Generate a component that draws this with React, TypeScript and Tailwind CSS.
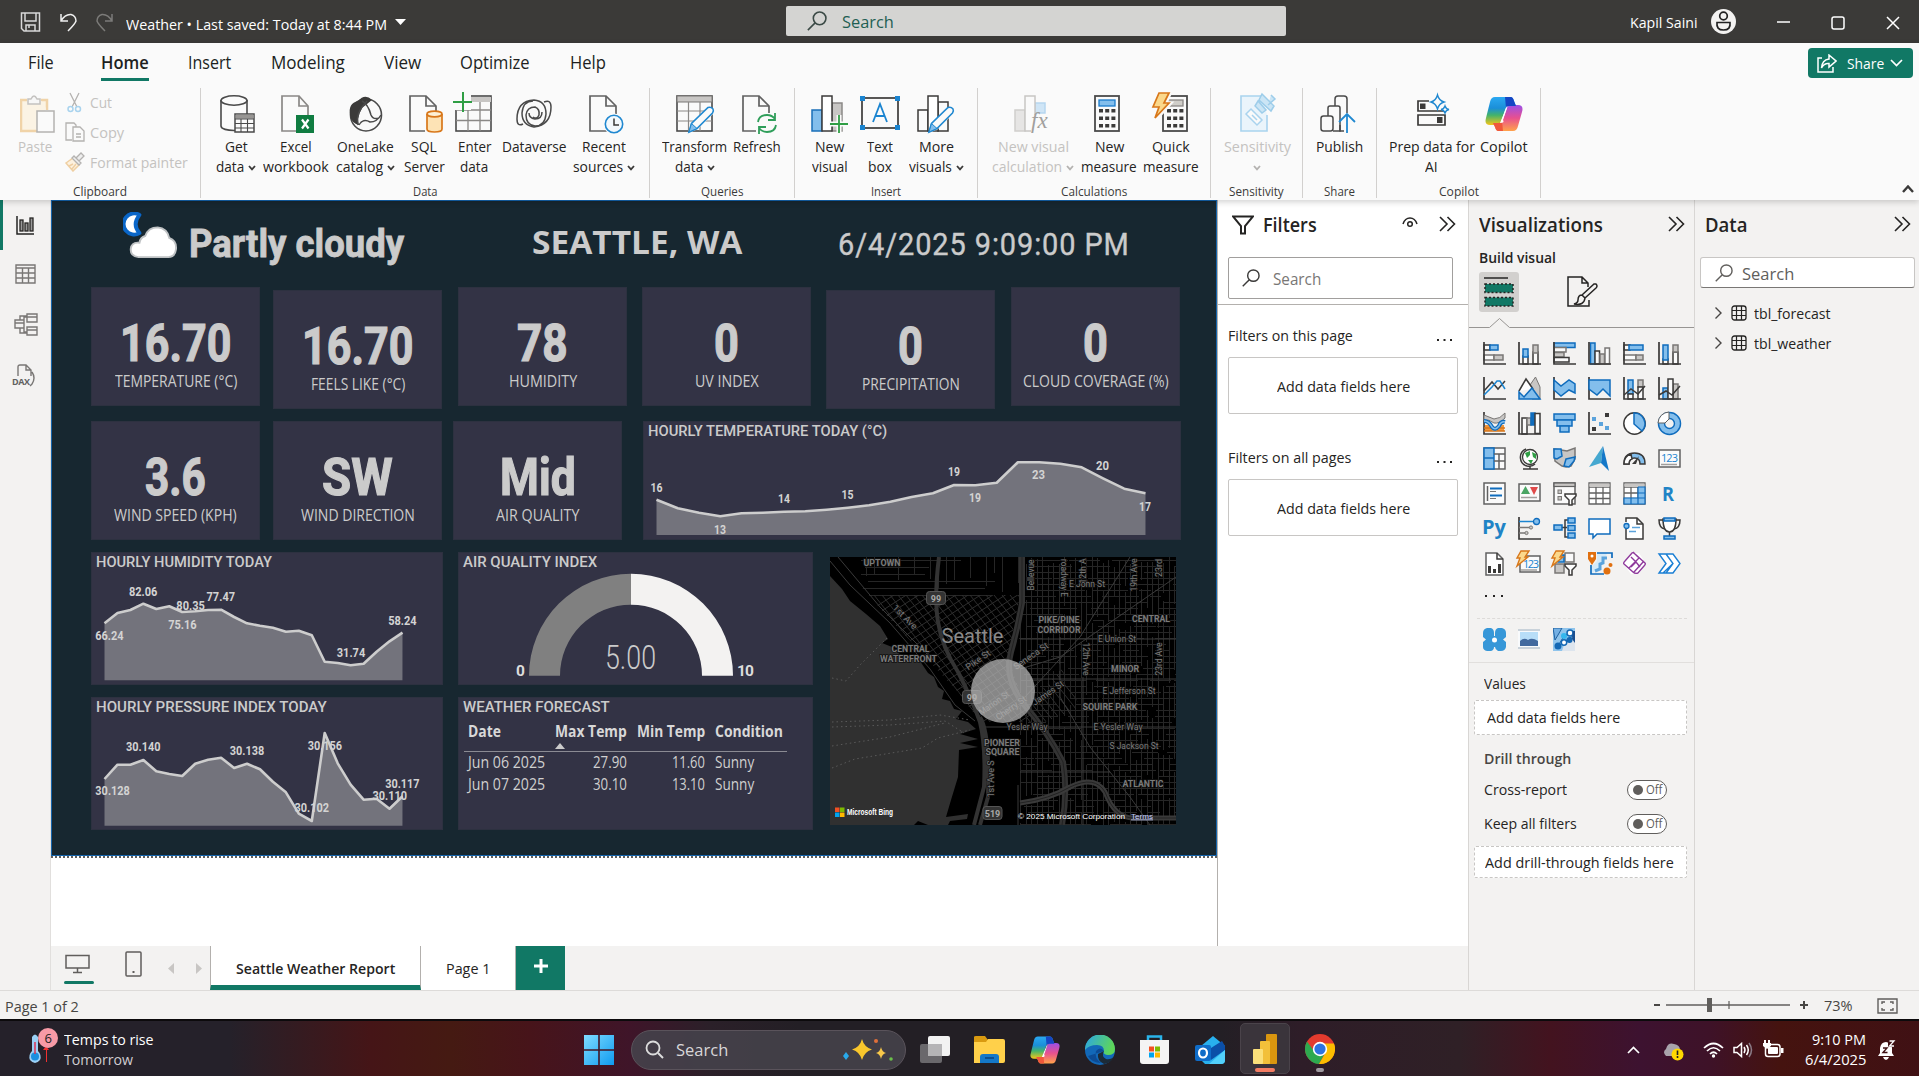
import React, { useLayoutEffect, useRef, useState } from "react";

const DIN = "font-['Roboto',sans-serif]";
const K = "#3b3a39";
const B = "#0f6cbd";
const LB = "#83beec";
const G = "#c8c6c4";
const DG = "#797775";

/** One line of text squeezed or stretched to an exact width. */
function Fit({ w, className = "", children }: { w: number; className?: string; children: React.ReactNode }) {
  const ref = useRef<HTMLSpanElement>(null);
  const [sx, setSx] = useState(1);
  useLayoutEffect(() => {
    if (ref.current) setSx(w / ref.current.offsetWidth);
  }, [w, children]);
  return (
    <span className={"block shrink-0 whitespace-nowrap " + className} style={{ width: w }}>
      <span ref={ref} className="inline-block origin-left" style={{ transform: `scaleX(${sx})` }}>
        {children}
      </span>
    </span>
  );
}

type RP = { x: number; y: number; w: number; h: number; f?: string; s?: string; sw?: number; r?: number };
const R = ({ x, y, w, h, f = "#fafafa", s = K, sw = 1.5, r = 0 }: RP) => (
  <rect x={x} y={y} width={w} height={h} fill={f} stroke={s} strokeWidth={sw} rx={r} />
);
const P = ({ d, f = "none", s = K, sw = 1.5 }: { d: string; f?: string; s?: string; sw?: number }) => (
  <path d={d} fill={f} stroke={s} strokeWidth={sw} />
);

/* ---------- small shared icons ---------- */
const Chev = ({ c = K, className = "" }: { c?: string; className?: string }) => (
  <svg className={"shrink-0 " + className} width="8" height="6" viewBox="0 0 8 6"><P d="M1 1 4 4.4 7 1" s={c} sw={1.8} /></svg>
);
const DblChev = () => (
  <svg width="17" height="16" viewBox="0 0 17 16"><P d="M1 1 8 8 1 15M8.500 1 15.500 8 8.500 15" s="#252423" sw={1.6} /></svg>
);
const Mag = ({ c = K, size = 19 }: { c?: string; size?: number }) => (
  <svg className="shrink-0" width={size} height={size} viewBox="0 0 19 19"><circle cx="12" cy="7" r="6" fill="none" stroke={c} strokeWidth="1.5" /><P d="M7.700 11.300 .8 18.200" s={c} sw={1.5} /></svg>
);
const DocShape = ({ c = "#616161" }: { c?: string }) => (
  <><P d="M5 1H21L31 11V36H5Z" f="#fafafa" s={c} sw={1.7} /><P d="M21 1V11H31" s={c} sw={1.7} /></>
);
const Pencil = () => (
  <g><path d="M13 38 16 28 32 12 38 18 22 34Z" fill="#fafafa" /><P d="M13 37 15.500 28.500 32 12.500Q35 11.500 37 14 38 16 36.500 18L21 33.500Z" f="#fafafa" s="#2088d0" sw={1.6} /><path d="M13 37 15.500 28.500 21 33.500Z" fill="#83beec" stroke="#2088d0" /></g>
);

const CopilotLogo = ({ size }: { size: number }) => (
  <svg width={size} height={size} viewBox="0 0 38 38">
    <defs>
      <linearGradient id={"cpa" + size} x1="0" y1="0" x2="0" y2="1"><stop offset="0" stopColor="#2aa8f2" /><stop offset=".4" stopColor="#1b8fd8" /><stop offset=".65" stopColor="#43b36b" /><stop offset="1" stopColor="#f5c518" /></linearGradient>
      <linearGradient id={"cpb" + size} x1="0" y1="0" x2="0" y2="1"><stop offset="0" stopColor="#9b4fe8" /><stop offset=".5" stopColor="#e8508f" /><stop offset="1" stopColor="#ffa24a" /></linearGradient>
    </defs>
    <path d="M10 2H25Q28 2 29 6L31 11H24Q21 11 20 15L16 27Q15 30 11 30H5Q-1 30 1 23L5 7Q6 2 10 2Z" fill={`url(#cpa${size})`} />
    <path d="M28 36H14Q11 36 10 32L8 28H14Q17 28 18 24L22 13Q23 10 27 10H33Q39 10 37 17L33 31Q32 36 28 36Z" fill={`url(#cpb${size})`} />
    <path d="M20 2H26Q28 2 29 6L31 11H24Q22 11 21 13Z" fill="#1546c4" />
    <path d="M18 36H13Q11 36 10 32L8 28H14Q16 28 17 26Z" fill="#f0583a" />
    <path d="M22 11 15 28Q20 28 18 25L22 13Z" fill="#fff" />
  </svg>
);

/* ---------- title bar ---------- */
function TitleBar() {
  return (
    <div className="flex h-[43px] items-center bg-[#3b3a38] text-white">
      <div className="flex w-[786px] items-center">
        <svg className="ml-[20px]" width="21" height="20" viewBox="0 0 21 20"><P d="M1.500 1H19.500V19H4L1.500 16.500ZM5 1V9H16V1M6 19V13H15V19M9 13V16" s="#d8d8d8" /></svg>
        <svg className="ml-[18px]" width="19" height="20" viewBox="0 0 19 20"><P d="M2 2V9H9M2 9Q6 2 12 2.500 17 4 17 9 16 12 9 19" s="#f0f0f0" /></svg>
        <svg className="ml-[17px]" width="19" height="20" viewBox="0 0 19 20"><P d="M17 2V9H10M17 9Q13 2 7 2.500 2 4 2 9 3 12 10 19" s="#7c7b79" /></svg>
        <Fit w={261} className="mt-[5px] ml-[12px] text-[15px] leading-5">Weather • Last saved: Today at 8:44 PM</Fit>
        <svg className="ml-[8px]" width="11" height="6"><path d="M0 0H11L5.500 6Z" fill="#fff" /></svg>
      </div>
      <div className="-mt-[1px] flex h-[30px] w-[500px] items-center rounded-[2px] bg-[#d4d4d2]">
        <div className="ml-[21px]"><Mag c="#3b4a46" size={20} /></div>
        <Fit w={52} className="mt-[2px] ml-[15px] text-[17px] leading-5 text-[#1f5f52]">Search</Fit>
      </div>
      <Fit w={68} className="ml-[344px] text-[15px] leading-5">Kapil Saini</Fit>
      <svg className="ml-[13px]" width="25" height="25" viewBox="0 0 25 25"><circle cx="12.500" cy="12.500" r="12.500" fill="#f3f2f1" /><circle cx="12.500" cy="7" r="3.800" fill="none" stroke="#222" strokeWidth="1.700" /><P d="M6 13.500H19Q20 21 12.500 21 5 21 6 13.500Z" s="#222" sw={1.700} /></svg>
      <svg className="ml-[41px]" width="14" height="14"><P d="M0 7H13" s="#fff" /></svg>
      <svg className="mt-[3px] ml-[40px]" width="14" height="14"><R x={1} y={1} w={12} h={12} f="none" s="#fff" r={2} /></svg>
      <svg className="mt-[3px] ml-[41px]" width="14" height="14"><P d="M1 1 13 13M13 1 1 13" s="#fff" /></svg>
    </div>
  );
}

/* ---------- ribbon ---------- */
const tabs = [
  { t: "File", w: 26, ml: 28 }, { t: "Home", w: 48, ml: 47, on: true }, { t: "Insert", w: 43, ml: 39 },
  { t: "Modeling", w: 74, ml: 40 }, { t: "View", w: 37, ml: 39 }, { t: "Optimize", w: 70, ml: 39 }, { t: "Help", w: 36, ml: 40 },
];

const Calc = ({ x = 5 }: { x?: number }) => (
  <>
    <R x={x} y={1} w={24} h={35} s="#4a4a4a" sw={1.800} />
    <R x={x + 4} y={5} w={16} h={6} f={x > 5 ? "#d0cec9" : "#83beec"} s={x > 5 ? "#8a8886" : "#1a7ccc"} sw={1.300} />
    {[14, 21.500, 29].map((y) => [0, 6.200, 12.400].map((dx) => <rect key={y + "-" + dx} x={x + 4 + dx} y={y} width="4" height="3.500" fill="#3b3a39" />))}
  </>
);

const ribbonIcons: Record<string, React.ReactNode> = {
  get: <><P d="M4 5V31C4 37 30 37 30 31V5" f="#fafafa" s="#4a4a4a" sw={1.600} /><ellipse cx="17" cy="5.500" rx="13" ry="4.700" fill="#fafafa" stroke="#4a4a4a" strokeWidth="1.600" /><R x={18} y={19} w={19} h={18} s="#4a4a4a" /><rect x="18.700" y="19.700" width="18" height="4" fill="#979593" /><P d="M18 24H37M18 28.500H37M18 33H37M24 24V37M30.500 24V37" s="#4a4a4a" sw={1.100} /></>,
  excel: <><P d="M5 1H22L31 11V36H5Z" s="#8a8886" sw={1.700} f="#fafafa" /><P d="M22 1V11H31" s="#8a8886" sw={1.700} /><rect x="19" y="20" width="18" height="18" fill="#107c41" /><P d="M25 24.500 31.500 33.500M31.500 24.500 25 33.500" s="#fff" sw={2.200} /></>,
  onelake: <><ellipse cx="19" cy="20" rx="15.500" ry="16" fill="#fafafa" stroke="#4a4a4a" strokeWidth="1.600" /><path d="M3 20Q1 8 11 6 18-2 25 5L15 13Q9 24 12 30 4 28 3 20Z" fill="#3b3a39" /><P d="M15 6Q21 9 24 20 26 25 32 23M12 30Q16 23 23 27 30 27 34 20M11 30Q8 18 20 6" f="none" s="#4a4a4a" /></>,
  sql: <><DocShape /><path d="M20 16H40V38H20Z" fill="#fafafa" /><P d="M22 19V34C22 38 37 38 37 34V19" f="#fde3b5" s="#d8771a" sw={1.700} /><ellipse cx="29.500" cy="19" rx="7.500" ry="2.800" fill="#fdf0d5" stroke="#d8771a" strokeWidth="1.700" /></>,
  enter: <><R x={1} y={1} w={35} h={35} s="#4a4a4a" sw={1.600} /><rect x="12" y="2" width="24" height="5" fill="#c8c6c4" /><P d="M1 15H36M1 25.500H36M13 7V36M25 7V36" s="#8a8886" sw={1.300} /><path d="M-1 0H16V15H-1Z" fill="#fafafa" /><P d="M8-3V17M-2 7H17" s="#2f9e44" sw={2} /></>,
  dataverse: <><P d="M8 29Q2 32 2 24 2 6 19 5 31 6 31 19 30 31 20 31 11 30 11 20 12 12 20 12 25 14 24 20 22 25 18 22" s="#4a4a4a" /><P d="M29 7Q36 4 36 12 36 30 19 32 7 30 7 18 8 6 18 6M27 17Q27 24 20 24 14 23 14 18" s="#4a4a4a" /></>,
  recent: <><DocShape /><circle cx="29" cy="29" r="10.500" fill="#fafafa" /><circle cx="29" cy="29" r="8.700" fill="#f3f9fd" stroke="#2088d0" strokeWidth="1.600" /><P d="M29 23.500V30H34" /></>,
  transform: <><R x={1} y={1} w={35} h={35} s="#4a4a4a" sw={1.600} /><rect x="1" y="1" width="35" height="6" fill="#c8c6c4" stroke="#797775" /><P d="M1 16H36M1 26H36M12.500 7V36M24 7V36" s="#8a8886" sw={1.200} /><Pencil /></>,
  refresh: <><DocShape /><path d="M18 18H40V38H18Z" fill="#fafafa" /><P d="M20 27Q21 20 29 20 34 20 37 24M37 18V25H30M38 30Q37 37 29 37 24 37 21 33M21 39V32H28" s="#2f9e5a" sw={1.800} /></>,
  newvisual: <><R x={1} y={15} w={10} h={21} f="#83beec" s="#1a6fb8" /><R x={21} y={8} w={10} h={28} f="#c8c6c4" s="#8a8886" /><R x={11} y={1} w={10} h={35} f="#fff" /><P d="M28 20V38M18 29H38" s="#fafafa" sw={5} /><P d="M28 20V38M19 29H37" s="#2f9e44" sw={1.800} /></>,
  text: <><R x={1} y={3} w={36} h={30} sw={1.700} /><P d="M12 27 19 9 26 27M14.500 21H23.500" s="#1a84d0" sw={1.800} />{[[-1, 1], [34, 1], [-1, 30], [34, 30]].map(([x, y]) => <rect key={x + "." + y} x={x} y={y} width="5" height="5" fill="#1a84d0" />)}</>,
  more: <><R x={1} y={15} w={10} h={21} /><R x={21} y={7} w={10} h={29} /><R x={11} y={1} w={10} h={35} f="#fff" /><g transform="translate(-1 0)"><Pencil /></g></>,
  newcalc: <><R x={1} y={15} w={10} h={21} f="#e6e5e4" s="#d0cecc" /><R x={21} y={8} w={10} h={10} f="#cfe5f6" s="#b6d6ef" /><R x={11} y={1} w={10} h={35} s="#c8c6c4" /><path d="M17 20H38V38H17Z" fill="#fafafa" /><text x="17" y="33" className="font-['Liberation_Serif',serif] text-[23px] italic" fill="#a19f9d">fx</text></>,
  newmeasure: <Calc />,
  quick: <><Calc x={11} /><path d="M6-3H19L14 8H19L3 26 5 13H0Z" fill="#fafafa" stroke="#fafafa" strokeWidth="3" /><P d="M7-2H17L12 8H17L3 23 7 12H1Z" f="#fbd88b" s="#d8771a" sw={1.700} /></>,
  sens: <><P d="M24 1H3V36H29V20" f="#eaf4fb" s="#a9d3ee" sw={1.600} /><P d="M8 19 13 14 24 25 19 30Z M14 20 19 25" f="#fafafa" s="#a9d3ee" /><P d="M24-1 36 11 33 16 21 5Z M20 6 28 15 24 18 17 11Z M33 0 37 4 30 10" f="#cbe5f5" s="#9dcdea" /></>,
  publish: <><R x={1} y={21} w={12} h={15} s="#4a4a4a" r={2.500} /><P d="M8 21V13Q8 11 10 11H18Q20 11 20 13V36H13" s="#4a4a4a" /><P d="M15 11V4Q15 1 18 1H24Q27 1 27 4V18M20 30V36H24" s="#4a4a4a" /><P d="M27 38V19M19 27 27 19 35 27" s="#2088d0" sw={1.800} /></>,
  prep: <><P d="M16 6H5V16H31M5 20H32V30H5Z" s="#3b3a39" sw={1.700} /><rect x="7" y="8.500" width="5.500" height="5.500" fill="#3b3a39" /><rect x="24" y="22" width="5.500" height="6" fill="#3b3a39" /><P d="M24.500 0Q26 5.500 31 7 26 8.500 24.500 14 23 8.500 18 7 23 5.500 24.500 0ZM32 11Q33 14 36 14.500 33 15 32 18 31 15 28 14.500 31 14 32 11Z" s="#2088d0" sw={1.400} /></>,
};

type Btn = { i: string; w: number; l: [string, number][]; ch?: boolean; dis?: boolean; chOnly?: boolean };
const groups: { name: string; nw: number; w: number; pl: number; b: Btn[] }[] = [
  { name: "Data", nw: 25, w: 449, pl: 6, b: [
    { i: "get", w: 60, l: [["Get", 23], ["data", 28]], ch: true }, { i: "excel", w: 60, l: [["Excel", 32], ["workbook", 66]] },
    { i: "onelake", w: 79, l: [["OneLake", 57], ["catalog", 47]], ch: true }, { i: "sql", w: 38, l: [["SQL", 26], ["Server", 41]] },
    { i: "enter", w: 62, l: [["Enter", 33], ["data", 28]] }, { i: "dataverse", w: 58, l: [["Dataverse", 65]] },
    { i: "recent", w: 82, l: [["Recent", 44], ["sources", 50]], ch: true }] },
  { name: "Queries", nw: 42, w: 145, pl: 7, b: [{ i: "transform", w: 77, l: [["Transform", 65], ["data", 28]], ch: true }, { i: "refresh", w: 48, l: [["Refresh", 48]] }] },
  { name: "Insert", nw: 30, w: 183, pl: 7, b: [{ i: "newvisual", w: 57, l: [["New", 29], ["visual", 36]] }, { i: "text", w: 43, l: [["Text", 26], ["box", 24]] }, { i: "more", w: 70, l: [["More", 35], ["visuals", 43]], ch: true }] },
  { name: "Calculations", nw: 66, w: 233, pl: 7, b: [{ i: "newcalc", w: 98, l: [["New visual", 71], ["calculation", 70]], ch: true, dis: true }, { i: "newmeasure", w: 54, l: [["New", 29], ["measure", 56]] }, { i: "quick", w: 69, l: [["Quick", 38], ["measure", 56]] }] },
  { name: "Sensitivity", nw: 55, w: 92, pl: 7, b: [{ i: "sens", w: 80, l: [["Sensitivity", 67]], dis: true, chOnly: true }] },
  { name: "Share", nw: 31, w: 74, pl: 7, b: [{ i: "publish", w: 60, l: [["Publish", 47]] }] },
  { name: "Copilot", nw: 40, w: 164, pl: 8, b: [{ i: "prep", w: 95, l: [["Prep data for", 86], ["AI", 13]] }, { i: "copilot", w: 49, l: [["Copilot", 48]] }] },
];

function GroupLabel({ w, children }: { w: number; children: string }) {
  return <div className="mt-[3px] flex justify-center"><Fit w={w} className="text-[13px] leading-5 text-[#3b3a39]">{children}</Fit></div>;
}

function Ribbon() {
  return (
    <div className="relative z-10 h-[157px] bg-[#fafafa] shadow-[0_2px_6px_rgba(0,0,0,0.18)]">
      <div className="flex h-[45px] items-start text-[17.5px] text-[#201f1e]">
        {tabs.map((t) => (
          <div key={t.t} className="pt-[7px]" style={{ marginLeft: t.ml }}>
            <Fit w={t.w} className={t.on ? "leading-6 font-semibold" : "leading-6"}>{t.t}</Fit>
            {t.on && <div className="mt-[4px] h-[3px] bg-[#117865]" />}
          </div>
        ))}
        <div className="mt-[5px] mr-[6px] ml-auto flex h-[30px] w-[105px] items-center rounded-[4px] bg-[#117865] text-white">
          <svg className="ml-[9px]" width="20" height="19" viewBox="0 0 20 19"><P d="M5 4H1V18H16V13" s="#fff" /><P d="M12 1 19 7 12 13V9.500Q7 9 4.500 14 5 6 12 5Z" s="#fff" /></svg>
          <Fit w={37} className="-mt-px ml-[10px] text-[15px] leading-5">Share</Fit>
          <svg className="ml-[6px]" width="13" height="8"><P d="M1 1 6.500 6.500 12 1" s="#fff" sw={1.700} /></svg>
        </div>
      </div>
      <div className="flex h-[110px]">
        <div className="w-[200px] text-[15px] text-[#c4c2c0]">
          <div className="flex h-[90px]">
            <div className="ml-[18px] w-[34px] pt-[7px]">
              <svg className="ml-[2px]" width="36" height="39" viewBox="0 0 36 39"><P d="M7 5H1V36H17M21 5H27V15" f="#fcf3e2" s="#f0d3a8" sw={2.500} /><path d="M3 7H25V34H3Z" fill="#fbf3e4" /><P d="M8 9V4H11Q14-2 17 4H20V9Z" f="#f7f7f7" s="#c4c2c0" /><R x={17} y={16} w={17} h={21} s="#b4b2b0" /></svg>
              <Fit w={34} className="mt-[2px] leading-5">Paste</Fit>
            </div>
            <div className="-mt-px ml-[13px]">
              <div className="flex h-[30px] items-center">
                <svg className="ml-[2px] w-[15px]" width="15" height="21" viewBox="0 0 15 21"><P d="M3 1 10 15M12 1 5 15" s="#b4b2b0" sw={1.300} /><circle cx="3.500" cy="17" r="2.500" fill="none" stroke="#a9d3ee" strokeWidth="1.500" /><circle cx="11" cy="17" r="2.500" fill="none" stroke="#a9d3ee" strokeWidth="1.500" /></svg>
                <Fit w={22} className="ml-[8px] leading-5">Cut</Fit>
              </div>
              <div className="flex h-[30px] items-center">
                <svg width="20" height="20" viewBox="0 0 20 20"><P d="M7 18H1V1H9L11 3V6" s="#b4b2b0" sw={1.300} /><P d="M8 5H15L19 9V19H8ZM11 12H16M11 15H16" f="#fafafa" s="#b4b2b0" sw={1.300} /></svg>
                <Fit w={34} className="ml-[5px] leading-5">Copy</Fit>
              </div>
              <div className="flex h-[30px] items-center">
                <svg width="20" height="20" viewBox="0 0 20 20"><P d="M1 11 8 6 14 13 8 19Z M4 14 8 12M7 17 11 12" f="#fdf1df" s="#efcfa2" /><P d="M7 6 9 4 16 11 14 13ZM11 6 16 1 19 4 14 9" f="#eee" s="#b4b2b0" sw={1.300} /></svg>
                <Fit w={98} className="ml-[5px] leading-5">Format painter</Fit>
              </div>
            </div>
          </div>
          <GroupLabel w={54}>Clipboard</GroupLabel>
        </div>
        {groups.map((g) => (
          <div key={g.name} className="border-l border-[#d2d0ce]" style={{ width: g.w }}>
            <div className="flex h-[90px]" style={{ paddingLeft: g.pl - 1 }}>
              {g.b.map((b) => (
                <div key={b.i} className="flex shrink-0 flex-col items-center pt-[7px]" style={{ width: b.w }}>
                  {b.i === "copilot" ? <div className="h-[39px]"><CopilotLogo size={38} /></div> : (
                    <svg className="shrink-0 overflow-visible" width="38" height="39" viewBox="0 0 38 39">{ribbonIcons[b.i]}</svg>
                  )}
                  {b.l.map(([t, w], n) => (
                    <div key={t} className={"flex h-5 shrink-0 items-center justify-center gap-[4px] text-[15px] leading-5 " + (n === 0 ? "mt-[2px] " : "") + (b.dis ? "text-[#c4c2c0]" : "text-[#252423]")}>
                      <Fit w={w}>{t}</Fit>
                      {b.ch && n === 1 && <Chev className="mt-[3px]" c={b.dis ? "#b4b2b0" : K} />}
                    </div>
                  ))}
                  {b.chOnly && <Chev c="#b4b2b0" className="mt-[9px]" />}
                </div>
              ))}
            </div>
            <GroupLabel w={g.nw}>{g.name}</GroupLabel>
          </div>
        ))}
        <div className="flex flex-1 items-end justify-end border-l border-[#d2d0ce] pr-[5px] pb-[5px]">
          <svg width="12" height="8"><P d="M1 7 6 1.500 11 7" sw={2.400} /></svg>
        </div>
      </div>
    </div>
  );
}

/* ---------- left rail ---------- */
function Rail() {
  return (
    <div className="w-[51px] border-r border-[#e1dfdd] bg-[#f3f2f1]">
      <div className="flex h-[50px] items-center border-l-[3px] border-[#117865] pl-[13px]">
        <svg width="19" height="19" viewBox="0 0 19 19"><P d="M1 0V18H18" s="#252423" /><R x={4} y={4} w={3} h={11} f="#999" s="#252423" sw={1.300} /><R x={9} y={7} w={3} h={8} f="#999" s="#252423" sw={1.300} /><R x={14} y={2} w={3} h={13} f="#999" s="#252423" sw={1.300} /></svg>
      </div>
      <svg className="mt-[14px] ml-[15px]" width="21" height="20" viewBox="0 0 21 20"><P d="M1 1H20V19H1ZM1 4H20M1 9H20M1 14H20M7.500 4V19M13.500 4V19" s="#797775" sw={1.400} /></svg>
      <svg className="mt-[29px] ml-[14px]" width="24" height="24" viewBox="0 0 24 24"><P d="M13 1H23V9H13ZM1 7H10V15H1ZM13 14H23V22H13ZM13 4H23M1 10H10M13 17H23M10 8V4H13M10 14V19H13M6 7V3H13M6 15V20H13" s="#797775" sw={1.400} /></svg>
      <svg className="mt-[27px] ml-[12px]" width="24" height="23" viewBox="0 0 24 23"><P d="M6 12V3Q6 1 8 1H14L19 6V12M14 1V6H19M20 8Q24 14 20 20L18 22" s="#797775" sw={1.400} /><text x="0" y="21" className="text-[9px] font-bold" fill="#616161" textLength="18">DAX</text></svg>
    </div>
  );
}

/* ---------- report canvas ---------- */
function Card({ v, vw, l, lw, className = "" }: { v: string; vw: number; l: string; lw: number; className?: string }) {
  return (
    <div className={"flex h-[119px] w-[169px] shrink-0 flex-col items-center border border-[#2d3140] bg-[#333345] text-[#cbcbcb] " + className}>
      <Fit w={vw} className={"mt-[30px] h-[52px] text-[52px] leading-[52px] font-bold [-webkit-text-stroke:1.2px_#cbcbcb] " + DIN}>{v}</Fit>
      <Fit w={lw} className="mt-[1px] text-[16px] leading-5">{l}</Fit>
    </div>
  );
}

type Lab = [string, number, number, number];
function Area({ title, tw, ys, x0, step, base, labels, className }: { title: string; tw: number; ys: number[]; x0: number; step: number; base: number; labels: Lab[]; className: string }) {
  const line = ys.map((y, i) => `${(x0 + i * step).toFixed(1)} ${y}`).join("L");
  const end = x0 + step * (ys.length - 1);
  return (
    <div className={"relative shrink-0 border border-[#2d3140] bg-[#333345] " + className}>
      <Fit w={tw} className={"relative ml-[4px] text-[15px] leading-[18px] font-medium text-[#cbcbcb] " + DIN}>{title}</Fit>
      <svg className="absolute -top-px -left-px h-full w-full overflow-visible">
        <path d={`M${x0} ${base}L${line}L${end} ${base}Z`} fill="#73737c" />
        <path d={"M" + line} fill="none" stroke="#cdcdcd" strokeWidth="2.600" strokeLinejoin="round" />
        {labels.map(([t, x, y, w], i) => (
          <text key={i} x={x} y={y + 4.200} textAnchor="middle" textLength={w} lengthAdjust="spacingAndGlyphs" className={"text-[12px] font-bold " + DIN} fill="#d3d3d3">{t}</text>
        ))}
      </svg>
    </div>
  );
}

function Gauge() {
  return (
    <div className="relative h-[133px] w-[355px] border border-[#2d3140] bg-[#333345]">
      <Fit w={134} className={"ml-[4px] text-[15px] leading-[18px] font-medium text-[#cbcbcb] " + DIN}>AIR QUALITY INDEX</Fit>
      <svg className="absolute -top-px -left-px" width="355" height="133">
        <path d="M71 123.700A102 102 0 0 1 173 21.700V52.700A71 71 0 0 0 102 123.700Z" fill="#808080" />
        <path d="M173 21.700A102 102 0 0 1 275 123.700H244A71 71 0 0 0 173 52.700Z" fill="#f3f2f1" />
        <text x="147" y="117" textLength="51" lengthAdjust="spacingAndGlyphs" className={"text-[33px] font-light " + DIN} fill="#cbcbcb">5.00</text>
        <text x="58" y="123.500" className={"text-[15.5px] font-bold " + DIN} fill="#dcdcdc">0</text>
        <text x="279" y="123.500" className={"text-[15.5px] font-bold " + DIN} textLength="17" fill="#dcdcdc">10</text>
      </svg>
    </div>
  );
}

function Forecast() {
  const rows = [["Jun 06 2025", "27.90", "11.60"], ["Jun 07 2025", "30.10", "13.10"]];
  return (
    <div className="h-[133px] w-[355px] border border-[#2d3140] bg-[#333345] text-[#d0d0d0]">
      <Fit w={147} className={"ml-[4px] text-[15px] leading-[18px] font-medium text-[#cbcbcb] " + DIN}>WEATHER FORECAST</Fit>
      <div className="ml-[5px] w-[323px] border-b border-[#8b8b93] text-[16px] font-bold text-[#d8d8d8]">
        <div className="mt-[3px] flex pl-[4px] leading-6">
          <Fit w={33}>Date</Fit>
          <Fit w={72} className="ml-[54px]">Max Temp</Fit>
          <Fit w={68} className="ml-[10px]">Min Temp</Fit>
          <Fit w={68} className="ml-[10px]">Condition</Fit>
        </div>
        <svg className="mb-[2px] ml-[91px]" width="10" height="6"><path d="M0 6H10L5 0Z" fill="#cbcbcb" /></svg>
      </div>
      {rows.map((r) => (
        <div key={r[0]} className="flex h-[22px] pl-[9px] text-[16px] leading-[21px]">
          <Fit w={77}>{r[0]}</Fit><Fit w={34} className="ml-[48px]">{r[1]}</Fit><Fit w={33} className="ml-[45px]">{r[2]}</Fit><Fit w={39} className="ml-[10px]">Sunny</Fit>
        </div>
      ))}
    </div>
  );
}

/** Repeatable pseudo-random numbers for the street grid. */
function makeRng(seed: number) {
  let s = seed;
  return () => { s = (s * 16807) % 2147483647; return s / 2147483647; };
}
function streets() {
  const rnd = makeRng(77);
  let d = "";
  for (let x = 190; x < 346; x += 5.500) {
    let y = rnd() * 10;
    while (y < 268) { const len = 18 + rnd() * 60; d += `M${x.toFixed(0)}.5 ${y.toFixed(0)}v${len.toFixed(0)}`; y += len + rnd() * 14; }
  }
  for (let y = 3; y < 268; y += 6) {
    let x = 188 + rnd() * 20;
    while (x < 346) { const len = 10 + rnd() * 45; d += `M${x.toFixed(0)} ${y.toFixed(0)}.5h${len.toFixed(0)}`; x += len + rnd() * 22; }
  }
  for (let x = 20; x < 190; x += 8) { if (rnd() > 0.3) d += `M${x}.5 0v${(15 + rnd() * 23).toFixed(0)}`; }
  for (let y = 3; y < 40; y += 7) d += `M${(25 + rnd() * 20).toFixed(0)} ${y}.5h${(60 + rnd() * 90).toFixed(0)}`;
  return d;
}
function downtown() {
  let d = "";
  for (let i = 0; i < 26; i++) d += `M${20 + i * 8} 38l150 190`;
  for (let i = 0; i < 34; i++) d += `M30 ${60 + i * 8}l170-110`;
  return d;
}
const mapLabels: [string, number, number, number, number, number][] = [
  ["UPTOWN", 52, 6, 37, 0, 8.500], ["PIKE/PINE", 229, 63, 41, 0, 8.500], ["CORRIDOR", 229, 72.500, 43, 0, 8.500],
  ["CENTRAL", 321, 62, 38, 0, 8.500], ["CENTRAL", 80.500, 92, 38, 0, 8.500], ["WATERFRONT", 78.500, 101.500, 57, 0, 8.500],
  ["MINOR", 295, 112, 28, 0, 8.500], ["SQUIRE PARK", 280, 150, 55, 0, 8.500], ["PIONEER", 172, 185.500, 36, 0, 8.500],
  ["SQUARE", 172.500, 195, 34, 0, 8.500], ["ATLANTIC", 313, 226.500, 41, 0, 8.500],
  ["E John St", 257, 27, 36, 0, 9], ["E Union St", 287, 82, 38, 0, 9], ["E Jefferson St", 299, 134, 53, 0, 9],
  ["E Yesler Way", 288, 170, 49, 0, 9], ["Yesler Way", 197, 170, 41, 0, 9], ["S Jackson St", 304, 189, 49, 0, 9],
  ["Bellevue", 201, 18, 31, -90, 9], ["12th A", 253, 14, 25, -90, 9], ["19th Ave", 303.500, 18, 33, -90, 9], ["23rd", 329, 11, 18, -90, 9],
  ["roadway E", 233.500, 21, 38, 90, 9], ["12th Ave", 256, 102, 33, 90, 9], ["23rd Ave", 329, 102, 33, -90, 9],
  ["1st Ave S", 161, 222, 37, -90, 9], ["1st Ave", 75, 60, 31, 45, 9], ["Pike St", 148, 103, 28, -35, 9],
  ["Seneca St", 201, 99, 40, -35, 9], ["James St", 218, 136, 36, -35, 9], ["Marion St", 164, 146, 35, -35, 9], ["Cherry St", 181, 151, 35, -35, 9],
];
function Shield({ x, y, t }: { x: number; y: number; t: string }) {
  return (<g><rect x={x - 9.500} y={y - 6.500} width="19" height="13" rx="3" fill="#333" stroke="#555" /><text x={x} y={y + 3.500} textAnchor="middle" className={"text-[9px] font-bold " + DIN} fill="#a8a8a8">{t}</text></g>);
}
function BingMap() {
  return (
    <svg className="mt-[5px] ml-[17px]" width="346" height="268" viewBox="0 0 346 268">
      <defs><clipPath id="dt"><path d="M38 38H190L178 100 195 150 232 112 250 150 215 165 150 165 128 135 60 62Z" /></clipPath><clipPath id="mp"><path d="M0 0H346V268H0Z" /></clipPath></defs>
      <g clipPath="url(#mp)">
        <rect width="346" height="268" fill="#000" />
        <path d={streets()} stroke="#262626" fill="none" />
        <path d="M5 0 60 62 128 140 155 170 150 268H0V0Z" fill="#000" />
        <path d={downtown()} stroke="#2e2e2e" fill="none" clipPath="url(#dt)" />
        <path d="M0 19 12 32 20 44 36 57 50 69 58 82 52 86 62 90 68 96 78 101 90 104 98 116 104 120 108 130 114 134 112 142 120 144 124 152 132 154 126 162 138 165 146 172 130 177 148 182 130 186 148 190 129 193 128 220 121 243 116 260 138 257 137 262 120 264 118 268H98L88 264 84 268H0Z" fill="#303030" />
        <path d="M0 4 20 28 60 66 100 112 125 148 145 164M8 0 50 50 110 110M300 0 250 80 195 140M346 20 230 100 190 112M230 80V140L260 190 300 240 320 268M190 215H280M188 228V268M150 170H346M253 120V268M190 82H346M200 122H346" stroke="#3a3a3a" fill="none" />
        <path d="M109 0Q104 40 108 65 112 90 128 115 142 142 150 165 156 190 154 230L144 268M150 160Q160 175 158 240L150 268" stroke="#333" strokeWidth="4" fill="none" />
        <path d="M192 0V46Q188 70 181 95 174 120 192 145 218 175 233 205 238 235 232 268" stroke="#333" strokeWidth="6" fill="none" />
        <path d="M192 0V46Q188 70 181 95 174 120 192 145 218 175 233 205 238 235 232 268" stroke="#222" fill="none" />
        <path d="M190 246Q220 242 240 230 265 218 275 235 285 262 305 261H346" stroke="#3a3a3a" strokeWidth="5" fill="none" />
        <path d="M190 246Q220 242 240 230 265 218 275 235 285 262 305 261H346" stroke="#222" fill="none" />
        <path d="M2 121 16 124 30 108 58 80M2 165 60 163 110 158 140 163M2 170 60 168 115 164 134 176M2 189 60 180 115 166M2 211 25 202 92 191 108 181 140 173" stroke="#5a5a5a" strokeDasharray="1.500 3" fill="none" />
        {mapLabels.map(([t, x, y, w, r, fs], i) => (
          <text key={i} transform={`translate(${x} ${y}) rotate(${r})`} y="3" textAnchor="middle" textLength={w} lengthAdjust="spacingAndGlyphs" fontSize={fs} fontWeight={fs < 9 ? 700 : 400} className={DIN} fill="#7b7b7b" stroke="#111" strokeWidth="1.500" paintOrder="stroke">{t}</text>
        ))}
        <text x="111.500" y="86" textLength="62" lengthAdjust="spacingAndGlyphs" className={"text-[19.5px] " + DIN} fill="#8a8a8a">Seattle</text>
        <Shield x={106} y={41} t="99" /><Shield x={142} y={140} t="99" /><Shield x={162.500} y={256} t="519" />
        <circle cx="173" cy="134" r="32" fill="#b4b4b4" fillOpacity=".75" />
        <g><rect x="5" y="250.500" width="4.500" height="4.500" fill="#f25022" /><rect x="10" y="250.500" width="4.500" height="4.500" fill="#7fba00" /><rect x="5" y="255.500" width="4.500" height="4.500" fill="#00a4ef" /><rect x="10" y="255.500" width="4.500" height="4.500" fill="#ffb900" /></g>
        <text x="17" y="258" textLength="46" lengthAdjust="spacingAndGlyphs" className="font-['Liberation_Sans',sans-serif] text-[8.5px] font-bold" fill="#fff">Microsoft Bing</text>
        <text x="188" y="261.500" textLength="107" lengthAdjust="spacingAndGlyphs" className="font-['Liberation_Sans',sans-serif] text-[8px]" fill="#fff">© 2025 Microsoft Corporation</text>
        <text x="301" y="261.500" textLength="22" lengthAdjust="spacingAndGlyphs" className="font-['Liberation_Sans',sans-serif] text-[8px] underline" fill="#c5d0ff">Terms</text>
      </g>
    </svg>
  );
}

function Report() {
  return (
    <div className="h-[656px] w-[1166px] border border-[#1464ac] bg-[#172730] text-[#cbcbcb]">
      <div className="flex h-[86px] items-start">
        <svg className="mt-[11px] ml-[71px]" width="56" height="48" viewBox="0 0 58 50">
          <path d="M17 3A11 11 0 1 0 17 22Q9 13 17 3Z" fill="#fff" stroke="#0a66c8" strokeWidth="4" strokeLinejoin="round" />
          <path d="M16 47Q7 46 8 38 9 31 17 32 18 26 23 25 26 16 36 16 46 17 48 27 56 30 55 39 54 47 47 47Z" fill="#fff" stroke="#bfc2c4" strokeWidth="2" />
        </svg>
        <Fit w={215} className={"mt-[19px] ml-[10px] text-[38px] leading-[48px] font-bold [-webkit-text-stroke:0.8px_#cbcbcb] " + DIN}>Partly cloudy</Fit>
        <Fit w={210} className="mt-[17px] ml-[128px] text-[33px] leading-[48px] font-bold">SEATTLE, WA</Fit>
        <Fit w={292} className={"mt-[19px] ml-[96px] text-[32px] leading-[48px] tracking-[1px] [-webkit-text-stroke:0.4px_#cbcbcb] " + DIN}>6/4/2025 9:09:00 PM</Fit>
      </div>
      <div className="flex pl-[39px]">
        <Card v="16.70" vw={111} l="TEMPERATURE (°C)" lw={122} />
        <Card v="16.70" vw={111} l="FEELS LIKE (°C)" lw={94} className="mt-[3px] ml-[13px]" />
        <Card v="78" vw={51} l="HUMIDITY" lw={68} className="ml-[16px]" />
        <Card v="0" vw={25} l="UV INDEX" lw={64} className="ml-[15px]" />
        <Card v="0" vw={25} l="PRECIPITATION" lw={98} className="mt-[3px] ml-[15px]" />
        <Card v="0" vw={25} l="CLOUD COVERAGE (%)" lw={146} className="ml-[16px]" />
      </div>
      <div className="mt-[12px] flex pl-[39px]">
        <Card v="3.6" vw={61} l="WIND SPEED (KPH)" lw={123} />
        <Card v="SW" vw={71} l="WIND DIRECTION" lw={114} className="ml-[13px]" />
        <Card v="Mid" vw={76} l="AIR QUALITY" lw={83} className="ml-[11px]" />
        <Area className="ml-[21px] h-[119px] w-[538px]" title="HOURLY TEMPERATURE TODAY (°C)" tw={239} x0={13.500} step={21.260} base={114}
          ys={[78.7, 87.3, 91.7, 95.3, 92.3, 91.7, 90.7, 90.3, 88.7, 86.7, 84.3, 80.7, 76, 72.3, 64, 64.3, 61.7, 41.3, 41.3, 42.7, 46.3, 57.3, 67.7, 72.3]}
          labels={[["16", 13.500, 66.300, 12], ["13", 77, 108.300, 12], ["14", 141, 78, 12], ["15", 204.500, 74, 12], ["19", 311, 51, 12], ["19", 332, 77, 12], ["23", 395.500, 53.300, 13], ["20", 459.600, 45, 13], ["17", 502, 85.300, 12]]} />
      </div>
      <div className="mt-[12px] flex pl-[39px]">
        <div className="flex w-[352px] flex-col gap-[12px]">
          <Area className="h-[133px]" title="HOURLY HUMIDITY TODAY" tw={176} x0={13.500} step={12.955} base={128.300}
            ys={[71.3, 61, 58, 51.7, 57, 54.3, 60, 59.3, 58, 57.7, 65, 71.3, 73.7, 75.7, 79.7, 78.7, 83.3, 109.7, 111, 113.3, 111.7, 99.7, 89.3, 80.7]}
            labels={[["82.06", 52.200, 39.700, 28.500], ["80.35", 99.600, 53.700, 28.500], ["77.47", 129.800, 44.700, 28.500], ["75.16", 91.400, 72.700, 28.500], ["66.24", 18.400, 84, 28.500], ["58.24", 311.400, 69, 28.500], ["31.74", 260, 101, 28.500]]} />
          <Area className="h-[133px]" title="HOURLY PRESSURE INDEX TODAY" tw={231} x0={13.500} step={12.955} base={128.700}
            ys={[82, 67.7, 67.7, 63, 74.3, 77, 79, 66.7, 62.7, 60.7, 71, 66.7, 72.3, 84.7, 95.3, 116.7, 124, 36, 66.3, 87.7, 102.7, 101.7, 111.7, 99.3]}
            labels={[["30.140", 52.200, 50, 34.500], ["30.138", 156, 54, 34.500], ["30.128", 21.600, 94, 34.500], ["30.156", 233.900, 49, 34.500], ["30.102", 220.800, 111, 34.500], ["30.117", 311.400, 87, 34.500], ["30.110", 298.800, 99, 34.500]]} />
        </div>
        <div className="ml-[15px] flex flex-col gap-[12px]"><Gauge /><Forecast /></div>
        <BingMap />
      </div>
    </div>
  );
}

/* ---------- filters pane ---------- */
function FilterSection({ title, w, className }: { title: string; w: number; className: string }) {
  return (
    <div className={"pl-[10px] " + className}>
      <div className="flex h-[24px] items-center text-[15px] text-[#252423]">
        <Fit w={w} className="-mt-[2px]">{title}</Fit>
        <svg className="mt-[7px] mr-[16px] ml-auto" width="15" height="2"><path d="M0 0H2V2H0ZM6.500 0H8.500V2H6.500ZM13 0H15V2H13Z" fill="#252423" /></svg>
      </div>
      <div className="mt-[9px] flex h-[57px] w-[230px] items-center rounded-[2px] border border-[#c8c6c4] pb-px pl-[48px] text-[15px] text-[#252423]"><div className="mt-[2px]"><Fit w={133}>Add data fields here</Fit></div></div>
    </div>
  );
}
function Filters() {
  return (
    <div className="w-[251px] border-l border-[#b3b0ad] bg-white">
      <div className="flex h-[48px] items-center">
        <svg className="mt-[1px] ml-[14px]" width="22" height="20" viewBox="0 0 22 20"><P d="M1 1.500H21L13 11V18.500H9V11Z" s="#252423" sw={2} /></svg>
        <Fit w={54} className="mt-[1px] ml-[9px] text-[19px] leading-6 font-semibold text-[#252423]">Filters</Fit>
        <svg className="-mt-[4px] ml-[85px]" width="16" height="11" viewBox="0 0 16 11"><P d="M1 7Q3 1 8 1 13 1 15 7" s="#252423" /><circle cx="8" cy="7" r="2.300" fill="none" stroke="#252423" strokeWidth="1.500" /></svg>
        <div className="-mt-px ml-[21px]"><DblChev /></div>
      </div>
      <div className="mt-[9px] ml-[10px] flex h-[42px] w-[225px] items-center rounded-[2px] border border-[#a19f9d] pl-[13px]">
        <Mag size={18} /><Fit w={48} className="mt-[2px] ml-[13px] text-[16.5px] leading-5 text-[#797775]">Search</Fit>
      </div>
      <div className="mt-[5px] h-px bg-[#b3b0ad]" />
      <FilterSection title="Filters on this page" w={125} className="mt-[19px]" />
      <FilterSection title="Filters on all pages" w={123} className="mt-[32px]" />
    </div>
  );
}

/* ---------- visualizations pane ---------- */
const Ax = ({ c = K }: { c?: string }) => <P d="M1 0V22H23" s={c} sw={1.700} />;
const Bolt = () => <P d="M3-1H11L7 5H10L-1 14 2 6H-1Z" f="#fbd88b" s="#d8771a" sw={1.400} />;
const Funnel = () => <P d="M12 12H23V14L19 18V23H16V18L12 14Z" f="#fff" />;
const Grid = () => <P d="M1 1H22V22H1ZM1 5H22M1 11H22M1 16.500H22M8 5V22M15 5V22" f="#fff" s="#616161" sw={1.300} />;
const vizIcons: React.ReactNode[] = [
  <><R x={1} y={3} w={6} h={5} /><R x={7} y={3} w={8} h={5} f={LB} s={B} /><R x={1} y={13} w={10} h={5} s={DG} /><R x={11} y={13} w={9} h={5} f={G} s={DG} /><Ax /></>,
  <><R x={5} y={14} w={5} h={8} /><R x={5} y={7} w={5} h={8} f={LB} s={B} /><R x={15} y={10} w={5} h={12} /><R x={15} y={3} w={5} h={8} f={G} s={DG} /><Ax /></>,
  <><R x={1} y={1} w={21} h={4.500} f={LB} s={B} /><R x={1} y={5.500} w={12} h={4.500} s={DG} /><R x={1} y={10.500} w={10} h={4.500} f={G} s={DG} /><R x={1} y={15.500} w={15} h={4.500} /><Ax /></>,
  <><R x={2.500} y={1} w={4.500} h={21} f={LB} s={B} /><R x={7} y={9} w={4.500} h={13} /><R x={12} y={12} w={4.500} h={10} f={G} s={DG} /><R x={17} y={6} w={4.500} h={16} s={DG} /><Ax /></>,
  <><R x={1} y={3} w={6} h={5} /><R x={6} y={3} w={14} h={5} f={LB} s={B} /><R x={1} y={13} w={12} h={5} s={DG} /><R x={13} y={13} w={7} h={5} f={G} s={DG} /><Ax /></>,
  <><R x={5} y={17} w={5} h={5} /><R x={5} y={3} w={5} h={15} f={LB} s={B} /><R x={15} y={10} w={5} h={12} /><R x={15} y={3} w={5} h={7} f={G} s={DG} /><Ax /></>,
  <><Ax /><P d="M1 14 9 5 15 12 22 4" /><P d="M1 18 9 10 14 4 17 4 22 12" s="#1a84d0" /></>,
  <><P d="M12 8 17.500 0 22 10V22H14Z" f={G} s={DG} sw={1} /><P d="M1 14 8 2 15 12" f="#fff" /><P d="M1 22V15L6 20 14 11 22 22Z" f={LB} s={B} /></>,
  <><Ax /><P d="M1 3 8 9 16 3 22 7V16L16 13 8 19 1 13Z" f={LB} s={B} /></>,
  <><Ax /><P d="M1 3H22V19L15 12 9 18 1 12Z" f={LB} s={B} /></>,
  <><R x={5} y={3} w={5} h={14} f={LB} s={B} /><R x={5} y={17} w={5} h={5} /><R x={15} y={3} w={5} h={7} f={G} s={DG} /><R x={15} y={10} w={5} h={12} /><Ax /><P d="M1 18 8 12 15 17 22 9" /></>,
  <><R x={5} y={11} w={5} h={11} f={LB} s={B} /><R x={15} y={7} w={5} h={15} f={G} s={DG} /><R x={10} y={2} w={5} h={20} /><Ax /><P d="M1 18 8 14 14 18 22 9" /></>,
  <><Ax /><path d="M2 13H9V19H2ZM14 13H21V19H14Z" fill="#f0953a" /><P d="M1 16H22M1 19H22" s="#d8771a" /><path d="M1 3Q6 5 11 7 17 7 22 1V6Q16 12 11 11 6 7 1 8Z" fill={G} stroke={DG} /><P d="M1 9Q6 9 9 15 12 19 16 14 18 9 22 10" s={B} sw={4} /><P d="M1 9Q6 9 9 15 12 19 16 14 18 9 22 10" s={LB} sw={1.500} /></>,
  <><R x={4} y={6} w={5} h={16} /><R x={9} y={6} w={4} h={7} f={G} s={DG} /><R x={13} y={1} w={4} h={12} f={B} s={B} /><R x={17} y={1.500} w={5} h={20} /><Ax /></>,
  <><R x={1} y={2} w={21} h={6} f={LB} s={B} /><R x={4} y={8} w={15} h={6} f={LB} s={B} /><R x={7} y={14} w={9} h={6} f={LB} s={B} /></>,
  <><Ax /><rect x="17" y="1" width="4" height="4" fill={K} /><rect x="4" y="5" width="4" height="4" fill="#5ba3dc" /><rect x="11" y="10" width="4" height="4" fill="#5ba3dc" /><rect x="17" y="14" width="4" height="4" fill="#5ba3dc" /><rect x="4" y="15" width="4" height="4" fill={K} /></>,
  <><circle cx="11.500" cy="11.500" r="10.700" fill="#fff" stroke={K} strokeWidth="1.500" /><P d="M11 1A10.700 10.700 0 0 1 19 19L11 12Z" f={LB} s={B} /></>,
  <><circle cx="11.500" cy="11.500" r="8" fill="none" stroke={B} strokeWidth="7.500" /><circle cx="11.500" cy="11.500" r="8" fill="none" stroke={LB} strokeWidth="4.700" /><path d="M11 0A11.500 11.500 0 0 0 0 11H7L11 7Z" fill="#fff" stroke="#616161" /></>,
  <><R x={1} y={1} w={21} h={21} s="#616161" /><R x={1} y={1} w={10} h={21} f={LB} s={B} /><P d="M1 11H11" s={B} /><P d="M11 7H22M16 7V22M11 14H22" s="#616161" /></>,
  <><P d="M8 2A9 9 0 0 0 9 19Q14 20 17 17M12 19V22M5 22H20" /><circle cx="12" cy="10" r="7.500" fill="#fff" stroke={K} strokeWidth="1.300" /><path d="M7 6 12 4 12 8 9 11ZM14 5 18 7 18 12 15 10ZM10 13 15 13 13 17Z" fill="#2f9e44" /></>,
  <><P d="M1 2 8 3 14 4 22 1V12L18 19 13 20 9 19 2 14Z" f={G} s={DG} /><P d="M1 2 8 2 9 9 4 12 1 11ZM13 12 22 10 21 14 16 20 11 19Z" f={LB} s={B} /></>,
  <><path d="M15-1 1 20 13 16Z" fill="#45a8d0" /><path d="M15-1 21 24 13 16Z" fill="#1478c8" /></>,
  <><P d="M1 17Q1 6 11.500 6 22 6 22 17H17Q17 11 11.500 11 6 11 6 17Z" f={LB} s={K} /><P d="M1 17Q1 9 8 7L9 12Q6 13 6 17Z" f="#fff" /><path d="M9 17 16 9 13 17Z" fill={K} /></>,
  <><R x={1} y={3} w={21} h={17} s="#616161" /><text x="3" y="15" textLength="17" className="text-[11px]" fill="#1a84d0">123</text><P d="M3 17.500H19" s="#a19f9d" /></>,
  <><R x={1} y={1} w={21} h={21} s="#616161" /><P d="M4.500 4V19" s="#616161" /><P d="M7 6.500H19M7 13.500H19" s={B} sw={2.200} /><P d="M7 9.500H13M7 16.500H13" s={DG} sw={1.200} /></>,
  <><R x={1} y={2} w={21} h={17} s="#616161" /><path d="M3 12 7.500 4 12 12Z" fill="#4aa564" /><path d="M12 5H20L16 13Z" fill="#e04a4a" /><P d="M3 15.500H19" s="#a19f9d" /></>,
  <><R x={1} y={1} w={21} h={21} s="#616161" /><R x={1} y={1} w={21} h={3.500} f={G} s="#616161" sw={1.200} /><R x={5} y={8} w={3.500} h={3.500} f={G} s={DG} sw={1} /><R x={5} y={14.500} w={3.500} h={3.500} f={G} s={DG} sw={1} /><Funnel /></>,
  <><Grid /><rect x="1.500" y="1.500" width="20" height="3.500" fill={G} /></>,
  <><Grid /><rect x="1.500" y="1.500" width="20" height="3.500" fill={G} /><path d="M15 5H22V22H1V16H8 15Z" fill={LB} /><P d="M15 5H22V22H1V16H22M15 5V22M8 16V22M15 11H22" s={B} sw={1.200} /></>,
  <text x="4" y="19" className="text-[20px] font-bold" textLength="12" lengthAdjust="spacingAndGlyphs" fill="#1f84c6">R</text>,
  <text x="-1" y="17" className="text-[20px] font-bold" textLength="24" lengthAdjust="spacingAndGlyphs" fill="#1f84c6">Py</text>,
  <><Ax /><P d="M1 4.500H16" s="#1a84d0" /><circle cx="18.500" cy="4.500" r="3" fill={LB} stroke={B} strokeWidth="1.300" /><P d="M1 10.500H12M1 16H7" s={DG} /><circle cx="13" cy="10.500" r="1.600" fill={G} stroke={DG} /><circle cx="8.500" cy="16" r="1.600" fill={G} stroke={DG} /></>,
  <><P d="M8 10.500H14M18 3H12V20H18" /><R x={1} y={8} w={8} h={5} f={LB} s={B} /><R x={15} y={1} w={7} h={5} f={LB} s={B} /><R x={15} y={8.500} w={7} h={5} f={LB} s={B} /><R x={15} y={16} w={7} h={5} f={LB} s={B} /></>,
  <P d="M1 2H22V17H9L5 21V17H1Z" f="#fff" s={B} />,
  <><P d="M3 5V1H14L20 7V22H3V12" f="#fff" /><P d="M14 1V7H20" /><circle cx="3.500" cy="9" r="2.500" fill={LB} stroke={B} strokeWidth="1.300" /><P d="M9 10.500H17M6 14.500H13" s="#5ba3dc" /></>,
  <><P d="M5 3H1Q1 11 7 12M17 3H22Q22 11 16 12M11.500 15V19" /><P d="M5 2H18Q18 15 11.500 15 5 15 5 2Z" f="#fff" /><R x={6} y={1} w={11} h={3} f={LB} s={B} /><R x={6} y={19} w={11} h={3} f={LB} s={B} /></>,
  <><P d="M3 1H14L20 7V23H3Z" f="#fff" s="#616161" /><P d="M14 1V7H20" /><path d="M5 14H8V21H5ZM10 17H13V21H10ZM15 12H18V21H15Z" fill={K} /></>,
  <><R x={2} y={4} w={20} h={16} s="#616161" /><text x="5" y="16" textLength="16" className="text-[11px]" fill="#1a84d0">123</text><P d="M3 18H19" s="#a19f9d" /><Bolt /></>,
  <><R x={12} y={1} w={9} h={9} s={DG} /><R x={2} y={12} w={9} h={9} f={G} s={DG} /><R x={5} y={3} w={6} h={7} f={LB} s={B} /><Funnel /><Bolt /></>,
  <><path d="M9 1H19L17 8 12 12 11 17 4 21V14L9 9Z" fill="#d5eaf8" /><P d="M9 1H24V6M3 13V22H16" s={B} sw={1.700} /><P d="M19 6H15V11L12 12V17L7 19" s="#5ba3dc" sw={3} /><path d="M0 0H8V7L4 13 0 7Z" fill="#e07010" /><circle cx="4" cy="4" r="1.500" fill="#fff" /><circle cx="19" cy="19" r="3.500" fill="#e07010" /><circle cx="22.500" cy="13" r="2" fill="#e07010" /></>,
  <><path d="M8 1H16L23 11.500 16 22H8L0 11.500Z" fill="#fff" /><P d="M9 1Q10 0 12 2L22 11Q23 12 21 14L15 21Q12 22 10 20L1 12Q0 11 2 9ZM6 16 16 6M11 20 21 9M13 10 17 15M8 5 13 10 8 15M15 5 10 0" s="#8f3a9c" sw={1.400} /></>,
  <><P d="M1 2H15L22 11.500 15 21H1L8 11.500ZM8 2 15 11.500 8 21M8 11.500 1 21M15 11.500 5 21" f="#fff" s="#1a7fd4" sw={1.400} /></>,
];

function Toggle() {
  return (
    <div className="mr-[27px] ml-auto flex h-[20px] w-[40px] items-center rounded-full border border-[#605e5c] bg-white pl-[5px]">
      <div className="h-[10px] w-[10px] rounded-full bg-[#605e5c]" />
      <Fit w={16} className="ml-[3px] text-[12px] leading-4 text-[#605e5c]">Off</Fit>
    </div>
  );
}
function Visualizations() {
  return (
    <div className="w-[226px] border-l border-[#d8d6d4] bg-[#f3f2f1] text-[15px] text-[#252423]">
      <div className="flex h-[48px] items-center pl-[10px]">
        <Fit w={124} className="mt-[1px] text-[19px] leading-6 font-semibold">Visualizations</Fit>
        <div className="ml-[65px]"><DblChev /></div>
      </div>
      <Fit w={77} className="-mt-[3px] ml-[10px] leading-6 font-semibold">Build visual</Fit>
      <div className="mt-[3px] flex h-[40px] pl-[10px]">
        <div className="h-[40px] w-[40px] rounded-[3px] bg-[#d2d0ce] p-[5px]">
          <svg width="30" height="30" viewBox="0 0 30 30"><P d="M0 1H24" s="#252423" /><rect x="1" y="7" width="28" height="8.500" fill="#117865" stroke="#252423" strokeWidth="1.500" strokeDasharray="2 2" /><rect x="1" y="20.500" width="28" height="8.500" fill="#117865" stroke="#252423" strokeWidth="1.500" strokeDasharray="2 2" /></svg>
        </div>
        <svg className="mt-[4px] ml-[48px]" width="31" height="32" viewBox="0 0 31 32"><P d="M22 24V30H1V1H15L21 7V11M15 1V7H21" s="#252423" /><P d="M29 8Q31 10 29 12L18 22 15 19 27 8ZM15 19Q11 19 11 24 11 27 7 28 17 30 18 22" f="#f3f2f1" s="#252423" /></svg>
      </div>
      <svg className="mt-[6px]" width="225" height="10"><P d="M0 9.500H20.500L30.500 .5 40.500 9.500H225" s="#979593" sw={1} f="none" /></svg>
      <div className="mt-[14px] ml-[14px] grid w-[210px] grid-cols-6 gap-y-[12px]">
        {vizIcons.map((ic, i) => <svg key={i} className="overflow-visible" width="23" height="23" viewBox="0 0 23 23">{ic}</svg>)}
      </div>
      <svg className="mt-[20px] ml-[16px]" width="18" height="3"><path d="M0 0H2V2H0ZM8 0H10V2H8ZM16 0H18V2H16Z" fill="#252423" /></svg>
      <div className="mt-[20px] ml-[8px] w-[210px] border-t border-dashed border-[#dddbd9]" />
      <div className="mt-[9px] ml-[14px] grid w-[210px] grid-cols-6">
        <svg width="23" height="23" viewBox="0 0 23 23"><path d="M4 0H8Q11 1 11 5V8H12V5Q12 1 15 0H19Q23 1 23 5V9L20 11.500 23 14V19Q22 23 18 23H15Q12 21 12 19H11Q11 22 8 23H4Q0 22 0 19V14L3 11.500 0 9V5Q0 1 4 0Z" fill="#3797d8" /><circle cx="11.500" cy="12" r="2.500" fill="#fff" /></svg>
        <svg width="23" height="23" viewBox="0 0 23 23"><rect y="1" width="22" height="20" fill="#f8fafc" /><rect y="1" width="22" height="2" fill="#c9d2da" /><rect y="19" width="22" height="2" fill="#c9d2da" /><rect x="2" y="4" width="18" height="14" fill="#b8def8" /><path d="M2 13Q6 9 10 12 14 9 20 13V18H2Z" fill="#41699e" /></svg>
        <svg width="23" height="23" viewBox="0 0 23 23"><rect width="22" height="23" fill="#8fc4ec" /><path d="M11 17 22 9V23H9Z" fill="#dde5ee" /><path d="M5 18 11 8 17 5 20 8 11 14 16 13" stroke="#1e5f9e" fill="none" /><path d="M0 0H9L5 7 2 12Z" fill="#74b0e4" stroke="#1e5f9e" /><circle cx="5" cy="18" r="3.500" fill="#1468b4" /><circle cx="11" cy="8" r="3" fill="#35b7ee" /><circle cx="17" cy="5" r="3" fill="#fff" stroke="#1468b4" strokeWidth="1.500" /><circle cx="11" cy="14.500" r="2.700" fill="#fff" stroke="#1468b4" strokeWidth="1.500" /><circle cx="16.500" cy="12" r="3" fill="#1468b4" /><path d="M20 3H22V15L19 11Z" fill="#1b4f90" /></svg>
      </div>
      <div className="mt-[11px] h-px bg-[#e1dfdd]" />
      <Fit w={42} className="mt-[8px] ml-[15px] leading-6">Values</Fit>
      <div className="mt-[5px] ml-[5px] flex h-[35px] w-[213px] items-center rounded-[2px] border border-dashed border-[#c8c6c4] bg-white pl-[12px]"><Fit w={133}>Add data fields here</Fit></div>
      <Fit w={87} className="mt-[11px] ml-[15px] leading-6 font-semibold text-[#484644]">Drill through</Fit>
      <div className="mt-[8px] flex h-[24px] items-center pl-[15px]"><Fit w={83} className="-mt-[2px]">Cross-report</Fit><Toggle /></div>
      <div className="mt-[10px] flex h-[24px] items-center pl-[15px]"><Fit w={93} className="-mt-[2px]">Keep all filters</Fit><Toggle /></div>
      <div className="mt-[10px] ml-[5px] flex h-[32px] w-[213px] items-center rounded-[2px] border border-dashed border-[#c8c6c4] bg-white pl-[10px]"><Fit w={189}>Add drill-through fields here</Fit></div>
    </div>
  );
}

function DataPane() {
  return (
    <div className="flex-1 border-l border-[#d8d6d4] bg-[#f3f2f1] text-[15px] text-[#252423]">
      <div className="flex h-[48px] items-center pl-[10px]">
        <Fit w={42} className="mt-[1px] text-[19px] leading-6 font-semibold">Data</Fit>
        <div className="ml-[147px]"><DblChev /></div>
      </div>
      <div className="mt-[9px] ml-[5px] flex h-[31px] w-[215px] items-center rounded-[3px] border border-[#c8c6c4] border-b-[#797775] bg-white pl-[14px] text-[16.5px] text-[#605e5c]">
        <Mag c="#605e5c" size={18} /><Fit w={52} className="mt-[3px] ml-[9px]">Search</Fit>
      </div>
      {["tbl_forecast", "tbl_weather"].map((t, i) => (
        <div key={t} className={"flex h-[30px] items-center pl-[19px] " + (i ? "" : "mt-[10px]")}>
          <svg width="9" height="14"><P d="M1.500 1.500 7 7 1.500 12.500" s="#484644" sw={1.400} /></svg>
          <svg className="ml-[8px]" width="16" height="16" viewBox="0 0 16 16"><rect x="1" y="1" width="14" height="14" rx="2.500" fill="none" stroke="#252423" strokeWidth="1.300" /><P d="M1 5.500H15M1 10.500H15M5.500 1V15M10.500 1V15" s="#252423" sw={1.200} /></svg>
          <Fit w={77} className="ml-[7px]">{t}</Fit>
        </div>
      ))}
    </div>
  );
}

/* ---------- page tabs and status bar ---------- */
function PageTabs() {
  return (
    <div className="flex h-[44px] bg-[#f3f2f1] text-[15px] text-[#252423]">
      <div className="flex w-[159px] items-start">
        <div className="mt-[8px] ml-[13px] w-[30px]">
          <svg width="26" height="20" viewBox="0 0 26 20"><P d="M2 1.500H25V14H2ZM13.500 14V18M9 18.500H18" s="#605e5c" /></svg>
          <div className="mt-[7px] h-[3px] rounded bg-[#117865]" />
        </div>
        <svg className="mt-[5px] ml-[31px]" width="17" height="27" viewBox="0 0 17 27"><R x={1} y={1} w={15} h={24} f="none" s="#605e5c" r={1} /><path d="M7.500 20H9.500V22H7.500Z" fill="#605e5c" /></svg>
        <svg className="mt-[17px] ml-[26px]" width="6" height="11"><path d="M6 0V11L0 5.500Z" fill="#c8c6c4" /></svg>
        <svg className="mt-[17px] ml-[22px]" width="6" height="11"><path d="M0 0V11L6 5.500Z" fill="#c8c6c4" /></svg>
      </div>
      <div className="w-[211px] border-x border-b-[5px] border-x-[#b3b0ad] border-b-[#117865] bg-white pt-[10px] pl-[25px]"><Fit w={159} className="leading-6 font-semibold">Seattle Weather Report</Fit></div>
      <div className="w-[95px] border-r border-[#b3b0ad] bg-white pt-[10px] pl-[25px]"><Fit w={44} className="leading-6">Page 1</Fit></div>
      <div className="flex w-[49px] items-center justify-center bg-[#117865] pb-[4px]"><svg width="14" height="14"><P d="M7 0V14M0 7H14" s="#fff" sw={3} /></svg></div>
    </div>
  );
}
function StatusBar() {
  return (
    <div className="flex h-[29px] items-center border-t border-[#dddbd9] bg-[#f3f2f1] text-[15px] text-[#484644]">
      <Fit w={74} className="mt-[2px] ml-[5px] leading-5">Page 1 of 2</Fit>
      <svg className="ml-auto" width="154" height="16" viewBox="0 0 154 16"><P d="M0 8H6M146 8H154M150 4V12" s="#484644" sw={2} /><P d="M12 8H136" s="#605e5c" /><path d="M53 1H58V15H53Z" fill="#605e5c" /><P d="M75 4V12" s="#605e5c" sw={1.200} /></svg>
      <Fit w={29} className="-mt-px ml-[16px] leading-5">73%</Fit>
      <svg className="mt-[2px] mr-[21px] ml-[24px]" width="21" height="16" viewBox="0 0 21 16"><P d="M1 1H20V15H1ZM5 6V4H8M13 4H16V6M16 10V12H13M8 12H5V10" s="#605e5c" sw={1.400} /></svg>
    </div>
  );
}

/* ---------- taskbar ---------- */
function Taskbar() {
  return (
    <div className="flex h-[57px] items-center border-t-2 border-[#0c0a0c] bg-[linear-gradient(90deg,#25212a_0,#25212a_230px,#451517_370px,#451a12_450px,#47141a_530px,#3f1529_630px,#2b2029_710px,#231f25_800px,#231f25_1220px,#2e1d28_1300px,#2f2026_1460px,#43131f_1550px,#3d1230_1640px,#3e1228_1710px,#45130f_1780px,#401114_1919px)] text-[15px] text-white">
      <svg className="-mt-[4px] ml-[27px]" width="32" height="38" viewBox="0 0 32 38"><path d="M5 9Q8 4 11 9V23Q15 27 13 32 8 38 3 32 1 27 5 23Z" fill="#9cd0f5" /><circle cx="8" cy="28.500" r="4" fill="#1b8fe0" /><path d="M8 14V26" stroke="#d35" strokeWidth="1.500" /><path d="M19 34V22H16L19 18 22 22H20V34Z" fill="#f03030" /><circle cx="21" cy="10" r="10" fill="#f79aa6" /><text x="17.500" y="15" className="text-[13px]" fill="#222">6</text></svg>
      <div className="ml-[5px] leading-5"><Fit w={90}>Temps to rise</Fit><Fit w={69} className="text-[#d0cdd0]">Tomorrow</Fit></div>
      <svg className="mt-[2px] ml-[430px]" width="30" height="30" viewBox="0 0 30 30"><defs><linearGradient id="wl" x2="1" y2="1"><stop stopColor="#7fdcff" /><stop offset="1" stopColor="#0f9bf0" /></linearGradient></defs><path d="M0 0H14.200V14.200H0ZM15.800 0H30V14.200H15.800ZM0 15.800H14.200V30H0ZM15.800 15.800H30V30H15.800Z" fill="url(#wl)" /></svg>
      <div className="mt-[2px] ml-[17px] flex h-[40px] w-[275px] items-center rounded-full border border-[#5a535b] bg-[#45414a]/90 pl-[13px]">
        <svg width="19" height="19" viewBox="0 0 19 19"><circle cx="8" cy="8" r="6.500" fill="none" stroke="#ddd" strokeWidth="1.800" /><P d="M13 13 18 18" s="#ddd" sw={2} /></svg>
        <Fit w={52} className="mt-[2px] ml-[12px] text-[16.5px] text-[#d8d6d8]">Search</Fit>
        <svg className="ml-[115px]" width="50" height="22" viewBox="0 0 50 22"><path d="M19 0Q21 8 29 10.500 21 13 19 21 17 13 9 10.500 17 8 19 0Z" fill="#f8c62c" /><path d="M38 8Q39 13 43 14 39 15 38 20 37 15 33 14 37 13 38 8Z" fill="#f8c84a" /><path d="M3 13 6 17 3 21 0 17Z" fill="#29a9ea" /><circle cx="33" cy="2" r="2" fill="#e0703a" /><circle cx="48" cy="20" r="1.800" fill="#6bc04a" /></svg>
      </div>
      <svg className="mt-[2px] ml-[14px]" width="30" height="27" viewBox="0 0 30 27"><rect x="0" y="8" width="22" height="19" rx="2" fill="#6a686c" /><rect x="8" y="0" width="22" height="20" rx="2" fill="#f2f2f2" /><rect x="8" y="8" width="14" height="12" fill="#b5b4b6" /></svg>
      <svg className="mt-[2px] ml-[24px]" width="31" height="27" viewBox="0 0 31 27"><path d="M0 1Q0 0 2 0H11L14 4V8H0Z" fill="#d99a10" /><path d="M0 6 12 6 14 3H29Q31 3 31 5V25Q31 27 29 27H0Z" fill="#ffd04a" /><path d="M6 27V21Q6 18 9 18H22Q25 18 25 21V27Z" fill="#1478c8" /><path d="M11 22H20" stroke="#0b4f90" strokeWidth="2" /></svg>
      <div className="mt-[2px] ml-[25px]"><CopilotLogo size={30} /></div>
      <svg className="mt-[2px] ml-[25px]" width="30" height="30" viewBox="0 0 30 30"><defs><linearGradient id="ed" x2="1" y2=".3"><stop stopColor="#2aa4e8" /><stop offset="1" stopColor="#5ed65a" /></linearGradient></defs><circle cx="15" cy="15" r="15" fill="#1268b8" /><path d="M0 15A15 15 0 0 1 30 14Q30 20 23 20 17 19 19 16 19 10 12 10 4 10 0 15Z" fill="url(#ed)" /><path d="M19 16Q15 11 11 16 9 23 16 28 7 28 3 21" fill="#0d4b94" /><path d="M19 16Q16 21 21 24 25 25 29 22 26 28 19 29 12 26 13 19Z" fill="#1c2b38" /></svg>
      <svg className="mt-[2px] ml-[25px]" width="29" height="30" viewBox="0 0 29 30"><path d="M8 6V1.500H21V6" fill="none" stroke="#2ab4ea" strokeWidth="2.500" /><path d="M0 5H29V26Q29 29 26 29H3Q0 29 0 26Z" fill="#f4f4f4" /><path d="M9 11.500H14V16.500H9Z" fill="#f25022" /><path d="M15 11.500H20V16.500H15Z" fill="#7fba00" /><path d="M9 17.500H14V22.500H9Z" fill="#00a4ef" /><path d="M15 17.500H20V22.500H15Z" fill="#ffb900" /></svg>
      <svg className="mt-[2px] ml-[26px]" width="30" height="28" viewBox="0 0 30 28"><path d="M6 10 18 0 30 10V24Q30 28 26 28H10L6 24Z" fill="#28b0ee" /><path d="M16 12 27 5 30 10V14L16 24Z" fill="#0b4fa8" /><path d="M14 28 30 14V24Q30 28 26 28Z" fill="#52d0fa" /><rect y="9" width="16" height="16" rx="2" fill="#0f6cc8" /><ellipse cx="8" cy="17" rx="4" ry="4.500" fill="none" stroke="#fff" strokeWidth="2.200" /></svg>
      <div className="ml-[15px] flex h-[51px] w-[50px] flex-col items-center rounded-[5px] border border-[#4a434a] bg-[#3a343b] pt-[10px]">
        <svg width="24" height="30" viewBox="0 0 24 30"><rect x="13" y="0" width="11" height="30" rx="1" fill="#d9960f" /><rect x="7" y="7" width="10" height="23" rx="1" fill="#f2c03a" /><rect x="0" y="15" width="10" height="15" rx="1" fill="#fbe07a" /></svg>
        <div className="mt-[4px] h-[4px] w-[20px] rounded bg-[#f47c63]" />
      </div>
      <div className="ml-[15px] flex h-[51px] flex-col items-center pt-[11px]">
        <svg width="30" height="30" viewBox="0 0 30 30"><circle cx="15" cy="15" r="15" fill="#e33b2e" /><path d="M2 7.500A15 15 0 0 0 14 30L20 19 9 17Z" fill="#2da94f" /><path d="M14 30A15 15 0 0 0 29 9.500H17L21 18Z" fill="#fdbd00" /><circle cx="15" cy="15" r="7.200" fill="#fff" /><circle cx="15" cy="15" r="5.600" fill="#2f73e0" /></svg>
        <div className="mt-[4px] h-[4px] w-[8px] rounded bg-[#a09aa0]" />
      </div>
      <svg className="mt-[2px] ml-[292px]" width="13" height="8"><P d="M1 7 6.500 1.500 12 7" s="#fff" sw={1.700} /></svg>
      <svg className="mt-[5px] ml-[23px]" width="21" height="20" viewBox="0 0 21 20"><path d="M3 15Q-1 11 3 8 5 1 11 3 17 4 17 9V15Z" fill="#a8a3ab" /><circle cx="14.500" cy="13.500" r="6" fill="#ffd800" /><path d="M13.700 9.500H15.300V14H13.700ZM13.700 15H15.300V17H13.700Z" fill="#222" /></svg>
      <svg className="mt-[2px] ml-[19px]" width="21" height="16" viewBox="0 0 21 16"><P d="M1 6Q10.500-3 20 6M4 9Q10.500 2.500 17 9M7 12Q10.500 8.500 14 12" s="#fff" sw={1.700} /><circle cx="10.500" cy="14" r="1.700" fill="#fff" /></svg>
      <svg className="mt-[2px] ml-[9px]" width="20" height="16" viewBox="0 0 20 16"><P d="M1 5.500H4L8.500 1.500V14.500L4 10.500H1Z" s="#fff" /><P d="M11 5Q13 8 11 11M13.500 3Q17 8 13.500 13" s="#fff" /><P d="M16 1Q21 8 16 15" s="#8a7a85" /></svg>
      <svg className="ml-[10px]" width="21" height="18" viewBox="0 0 21 18"><rect x="2.500" y="4.500" width="14.500" height="12" rx="2.500" fill="none" stroke="#fff" strokeWidth="1.500" /><rect x="5" y="7" width="10" height="7" rx="1" fill="#fff" /><path d="M18 8H20.500V13H18Z" fill="#fff" /><path d="M0 3H8V6L4 9 0 6ZM1 0H3V3H1ZM5 0H7V3H5Z" fill="#fff" /></svg>
      <div className="ml-[20px] flex w-[62px] flex-col items-end leading-5"><Fit w={54}>9:10 PM</Fit><Fit w={61}>6/4/2025</Fit></div>
      <svg className="mt-[2px] ml-[11px]" width="19" height="20" viewBox="0 0 19 20"><path d="M1 16 3 13V8Q4 2 9 2 15 3 15 8V13L17 16ZM6 17H12Q11 20 9 20 7 20 6 17Z" fill="#fff" /><path d="M6 8H10L6 12.500H10.500" fill="none" stroke="#401114" strokeWidth="1.400" /><path d="M11 0H18V7H11Z" fill="#401114" /><path d="M12.500 1H17L12.500 6H17" fill="none" stroke="#fff" strokeWidth="1.300" /></svg>
    </div>
  );
}

export default function App() {
  return (
    <div className="flex h-[1076px] w-[1919px] flex-col overflow-hidden bg-[#f3f2f1] font-['Open_Sans','Noto_Sans',sans-serif]">
      <TitleBar />
      <Ribbon />
      <div className="flex h-[790px]">
        <Rail />
        <div className="w-[1417px]">
          <div className="flex h-[746px]">
            <div className="w-[1166px] bg-white">
              <Report />
              <div className="h-[2px] bg-[repeating-linear-gradient(90deg,#605e5c_0,#605e5c_2px,#fff_2px,#fff_4px)]" />
            </div>
            <Filters />
          </div>
          <PageTabs />
        </div>
        <Visualizations />
        <DataPane />
      </div>
      <StatusBar />
      <Taskbar />
    </div>
  );
}
